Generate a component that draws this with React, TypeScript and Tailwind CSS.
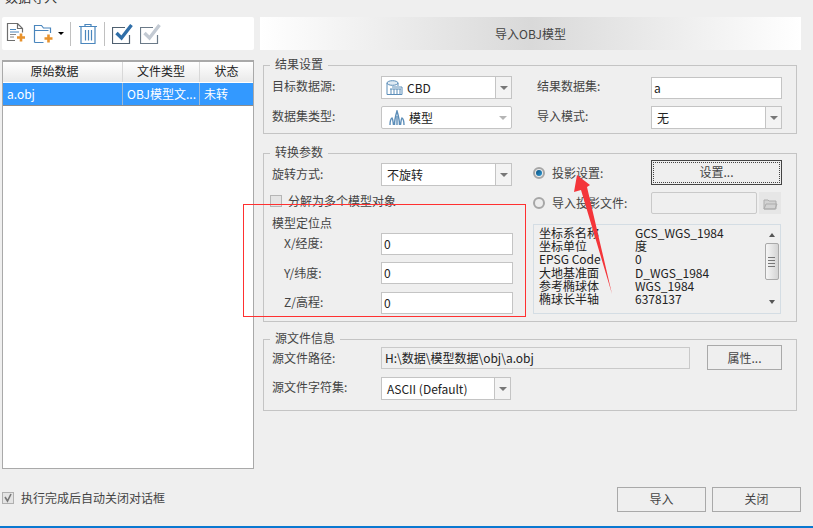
import React from "react";

const Group: React.FC<{ title: string; className: string; children: React.ReactNode }> = ({ title, className, children }) => (
  <div className={`relative ml-[3px] w-[534px] border border-[#c4c4c4] ${className}`}>
    <div className="absolute left-[6px] top-[-10px] bg-[#efefef] px-[5px] leading-[16px] text-[#444]">{title}</div>
    {children}
  </div>
);

const Caret: React.FC<{ light?: boolean }> = ({ light }) => (
  <div className={`h-0 w-0 border-x-[4px] border-t-[4px] border-x-transparent ${light ? "border-t-[#b5b5b5]" : "border-t-[#777]"}`} />
);

const Combo: React.FC<{ w?: string; plain?: boolean; icon?: React.ReactNode; children: React.ReactNode }> = ({ w = "w-[131px]", plain, icon, children }) => (
  <div className={`flex h-[23px] ${w} items-center border border-[#c4c4c4] bg-white text-[#222] ${plain ? "rounded-[2px]" : ""}`}>
    <div className="flex min-w-0 flex-1 items-center gap-[4px] pl-[5px]">
      {icon}
      {children}
    </div>
    <div className={`flex h-full w-[16px] items-center justify-center ${plain ? "" : "border-l border-[#c4c4c4] bg-[#f3f3f3]"}`}>
      <Caret light={plain} />
    </div>
  </div>
);

const TextBox: React.FC<{ w?: string; h?: string; children?: React.ReactNode }> = ({ w = "w-[132px]", h = "h-[22px]", children }) => (
  <div className={`flex ${h} ${w} items-center border border-[#c4c4c4] bg-white pl-[2px] text-[#222]`}>{children}</div>
);

const Radio: React.FC<{ on?: boolean }> = ({ on }) => (
  <div className="flex h-[12px] w-[12px] shrink-0 items-center justify-center rounded-full border-2 border-[#a6a6a6] bg-[#ececec]">
    {on && <div className="h-[6px] w-[6px] rounded-full bg-gradient-to-br from-[#0a4f7e] to-[#2d9bd6]" />}
  </div>
);

const DocAdd = () => (
  <svg width="20" height="21" viewBox="0 0 20 21" fill="none">
    <path d="M9 17.5H1.5V.5h10l5 5v4M11.500 .5v5h5" stroke="#6e6e6e" strokeWidth="1.2" />
    <path d="M4 6.500h6M4 9h9" stroke="#4a86bd" />
    <path d="M4 11.500h6M4 14h4" stroke="#8a8a8a" />
    <path d="M15 10.500v8M11 14.500h8" stroke="#e8922c" strokeWidth="2.6" />
  </svg>
);
const FolderAdd = () => (
  <svg width="22" height="20" viewBox="0 0 22 20" fill="none" stroke="#4a86bd">
    <path d="M1.500 18.500V1.500h7l2 2.500h7v5" strokeWidth="1.2" />
    <path d="M1.500 6.500h14M1.500 18.500h9" strokeWidth="1.2" />
    <path d="M15.500 10.500v8M11.500 14.500h8" stroke="#e8922c" strokeWidth="2.6" />
  </svg>
);
const Trash = () => (
  <svg width="18" height="20" viewBox="0 0 18 20" fill="none" stroke="#4a86bd" strokeWidth="1.2">
    <path d="M0 2.500h18M6 2.500V.5h6v2M2 3v16.500h14V3" />
    <path d="M6.500 6v10.500M9.500 6v10.500M12.500 6v10.500" />
  </svg>
);
const CheckBoxIcon: React.FC<{ box: string; mark: string }> = ({ box, mark }) => (
  <svg width="21" height="21" viewBox="0 0 21 21" fill="none">
    <path d="M13 4.500H.5v16h17V12" stroke={box} strokeWidth="1.2" />
    <path d="M4.500 10l5 5L19.500 2" stroke={mark} strokeWidth="3.4" />
  </svg>
);
const DbIcon = () => (
  <svg className="ml-[-1px]" width="17" height="16" viewBox="0 0 17 16" fill="none" stroke="#5b8db8">
    <ellipse cx="6.500" cy="3" rx="5.500" ry="2.300" fill="#dfeaf3" />
    <path d="M1 3v11.500h15V7H6M12 3v3" />
    <path d="M5 9v5M8 9v5M11 9v5M14 9v5M4 9h11" />
  </svg>
);
const ModelIcon = () => (
  <svg className="ml-[2px]" width="16" height="15" viewBox="0 0 16 15" fill="none" stroke="#5b8db8" strokeWidth="1.4">
    <path d="M1 15c0-4 .5-6 2-7 1 1 1 4 1.500 7M5.500 15c0-5 1-9 2.500-14 1.500 5 2.500 9 2.500 14M11.500 15c.5-3 .5-6 1.500-7 1.500 1 2 3 2 7" />
    <path d="M8 6v9" />
  </svg>
);

const info = [
  ["坐标系名称", "GCS_WGS_1984"],
  ["坐标单位", "度"],
  ["EPSG Code", "0"],
  ["大地基准面", "D_WGS_1984"],
  ["参考椭球体", "WGS_1984"],
  ["椭球长半轴", "6378137"],
];

export default function App() {
  return (
    <div className="relative flex h-[528px] w-[813px] flex-col overflow-hidden bg-[#efefef] text-[12px] leading-[16px] text-[#444] [font-family:'Noto_Sans_CJK_SC',sans-serif]">
      {/* title bar, cut off by the crop */}
      <div className="h-[17px] overflow-hidden pl-[5px]">
        <div className="mt-[-11px] text-[13px] text-[#333]">数据导入</div>
      </div>

      <div className="flex h-[452px]">
        {/* left column */}
        <div className="ml-[2px] flex w-[252px] flex-col">
          <div className="flex h-[33px] items-center rounded-[2px] bg-white pl-[4px]">
            <DocAdd />
            <div className="ml-[7px]"><FolderAdd /></div>
            <div className="ml-[3px]"><div className="h-0 w-0 border-x-[3px] border-t-[3px] border-x-transparent border-t-black" /></div>
            <div className="ml-[6px] h-[24px] w-px bg-[#c0c0c0]" />
            <div className="ml-[8px]"><Trash /></div>
            <div className="ml-[7px] h-[24px] w-px bg-[#c0c0c0]" />
            <div className="ml-[7px]"><CheckBoxIcon box="#4f6070" mark="#2f6ea8" /></div>
            <div className="ml-[7px]"><CheckBoxIcon box="#6b7a88" mark="#c3cad3" /></div>
          </div>
          <div className="mt-[10px] flex h-[409px] flex-col border border-t-2 border-[#a9a9a9] bg-white">
            <div className="flex h-[20px] items-center bg-gradient-to-b from-white to-[#e9e9e9] text-center text-[#222]">
              <div className="flex h-full w-[120px] items-center justify-center border-r border-[#d8d8d8] pb-[2px] pr-[16px]">原始数据</div>
              <div className="flex h-full w-[77px] items-center justify-center border-r border-[#d8d8d8] pb-[2px]">文件类型</div>
              <div className="flex-1 pb-[2px]">状态</div>
            </div>
            <div className="mt-[1px] flex h-[23px] items-center border-b border-[#8d8d8d] bg-[#3399ff] text-white">
              <div className="flex h-full w-[120px] items-center border-r border-[#9db9d6] pl-[4px]">a.obj</div>
              <div className="flex h-full w-[77px] items-center truncate border-r border-[#9db9d6] pl-[4px]">OBJ模型文...</div>
              <div className="flex-1 pl-[4px]">未转</div>
            </div>
          </div>
        </div>

        {/* right column */}
        <div className="ml-[6px] flex w-[541px] flex-col">
          <div className="flex h-[33px] items-center justify-center bg-gradient-to-r from-white via-[#d9d9d9] to-white text-[#444]">导入OBJ模型</div>

          <Group title="结果设置" className="mt-[15px] h-[69px] pl-[8px] pt-[10px]">
            <div className="grid grid-cols-[241px_249px] gap-x-[20px] gap-y-[7px]">
              <div className="flex items-center">
                <div className="w-[109px] pb-[3px]">目标数据源:</div>
                <Combo icon={<DbIcon />}>CBD</Combo>
              </div>
              <div className="flex items-center">
                <div className="w-[118px] pb-[3px] pl-[4px]">结果数据集:</div>
                <TextBox w="w-[131px]">a</TextBox>
              </div>
              <div className="flex items-center">
                <div className="w-[109px] pb-[3px]">数据集类型:</div>
                <Combo plain icon={<ModelIcon />}>模型</Combo>
              </div>
              <div className="flex items-center">
                <div className="w-[118px] pb-[3px] pl-[4px]">导入模式:</div>
                <Combo>无</Combo>
              </div>
            </div>
          </Group>

          <Group title="转换参数" className="mt-[19px] h-[169px] pl-[8px] pt-[9px]">
            <div className="grid grid-cols-[241px_249px] gap-x-[20px]">
              <div className="flex flex-col">
                <div className="flex items-center">
                  <div className="w-[109px] pb-[2px]">旋转方式:</div>
                  <Combo>不旋转</Combo>
                </div>
                <div className="ml-[-2px] mt-[9px] flex h-[12px] items-center gap-[6px]">
                  <div className="h-[12px] w-[12px] shrink-0 border border-[#b5b5b5] bg-[#e4e4e4]" />
                  分解为多个模型对象
                </div>
                <div className="mt-[8px]">模型定位点</div>
                <div className="mt-[2px] flex items-center">
                  <div className="w-[109px] pb-[2px] pl-[12px]">X/经度:</div>
                  <TextBox>0</TextBox>
                </div>
                <div className="mt-[7px] flex items-center">
                  <div className="w-[109px] pl-[12px]">Y/纬度:</div>
                  <TextBox>0</TextBox>
                </div>
                <div className="mt-[8px] flex items-center">
                  <div className="w-[109px] pb-[2px] pl-[12px]">Z/高程:</div>
                  <TextBox>0</TextBox>
                </div>
              </div>
              <div className="mt-[-3px] flex flex-col">
                <div className="flex items-center">
                  <div className="flex w-[118px] items-center gap-[7px]"><Radio on />投影设置:</div>
                  <div className="flex h-[25px] w-[131px] items-center justify-center border border-[#444] pb-[1px] text-[#444] outline-1 -outline-offset-3 outline-dotted outline-[#444]">设置...</div>
                </div>
                <div className="mt-[7px] flex items-center">
                  <div className="flex w-[118px] items-center gap-[7px]"><Radio />导入投影文件:</div>
                  <div className="h-[22px] w-[106px] rounded-[2px] border border-[#c9c9c9]" />
                  <div className="ml-[2px] flex h-[22px] w-[22px] items-center justify-center bg-[#e6e6e6]">
                    <svg width="15" height="13" viewBox="0 0 15 13" fill="#d2d2d2" stroke="#adadad">
                      <path d="M1 12V3h4l1 1h7v8zM1 12l2-5h11l-2 5z" />
                    </svg>
                  </div>
                </div>
                <div className="mt-[10px] flex h-[90px] w-[248px] border border-[#d4dde4] pl-[5px] text-[#222]">
                  <div className="flex-1 pt-[1px] leading-[13.2px]">
                    {info.map(([k, v]) => (
                      <div key={k} className="flex h-[13.2px]">
                        <div className="w-[96px]">{k}</div>
                        <div>{v}</div>
                      </div>
                    ))}
                  </div>
                  <div className="mr-[1px] flex w-[15px] flex-col items-center">
                    <div className="mt-[8px] h-0 w-0 border-x-[3.5px] border-b-[4px] border-x-transparent border-b-[#555]" />
                    <div className="mt-[6px] flex h-[37px] w-[14px] flex-col items-center justify-center gap-[2px] rounded-[2px] border border-[#a9a9a9] bg-gradient-to-r from-[#f6f6f6] to-[#d4d4d4]">
                      <div className="h-px w-[7px] bg-[#777]" />
                      <div className="h-px w-[7px] bg-[#777]" />
                      <div className="h-px w-[7px] bg-[#777]" />
                      <div className="h-px w-[7px] bg-[#777]" />
                    </div>
                    <div className="mt-[20px] h-0 w-0 border-x-[3.5px] border-t-[4px] border-x-transparent border-t-[#555]" />
                  </div>
                </div>
              </div>
            </div>
          </Group>

          <Group title="源文件信息" className="mt-[17px] h-[72px] pl-[8px] pt-[5px]">
            <div className="flex items-center">
              <div className="w-[109px]">源文件路径:</div>
              <div className="flex h-[22px] w-[309px] items-center border border-[#c9c9c9] pl-[3px] text-[#222]">H:\数据\模型数据\obj\a.obj</div>
              <div className="ml-[17px] flex h-[25px] w-[75px] items-center justify-center border border-[#a9a9a9]">属性...</div>
            </div>
            <div className="mt-[7px] flex items-center">
              <div className="w-[109px] pb-[3px]">源文件字符集:</div>
              <Combo w="w-[130px]">ASCII (Default)</Combo>
            </div>
          </Group>
        </div>
      </div>

      {/* footer */}
      <div className="mt-[18px] flex h-[25px] items-center">
        <div className="ml-[2px] flex items-center gap-[7px] pb-[3px]">
          <div className="flex h-[12px] w-[12px] items-center justify-center border border-[#b0b0b0] bg-[#e4e4e4]">
            <svg width="10" height="10" viewBox="0 0 10 10" fill="none" stroke="#777" strokeWidth="1.6">
              <path d="M2 4l2.500 4L8 1" />
            </svg>
          </div>
          执行完成后自动关闭对话框
        </div>
        <div className="ml-auto mr-[12px] flex gap-[6px]">
          <div className="flex h-[25px] w-[89px] items-center justify-center border border-[#a9a9a9] pb-[1px]">导入</div>
          <div className="flex h-[25px] w-[89px] items-center justify-center border border-[#a9a9a9] pb-[1px]">关闭</div>
        </div>
      </div>
      <div className="mt-auto h-[2px] bg-[#0a78d0]" />

      {/* red annotation drawn over the dialog */}
      <svg className="absolute left-0 top-0" width="813" height="528" fill="#f4353a">
        <rect x="243.5" y="204.5" width="282" height="112" fill="none" stroke="#ff3030" />
        <polygon points="577,175 590,185 587,187 612,294 581,190 574,192" />
      </svg>
    </div>
  );
}
